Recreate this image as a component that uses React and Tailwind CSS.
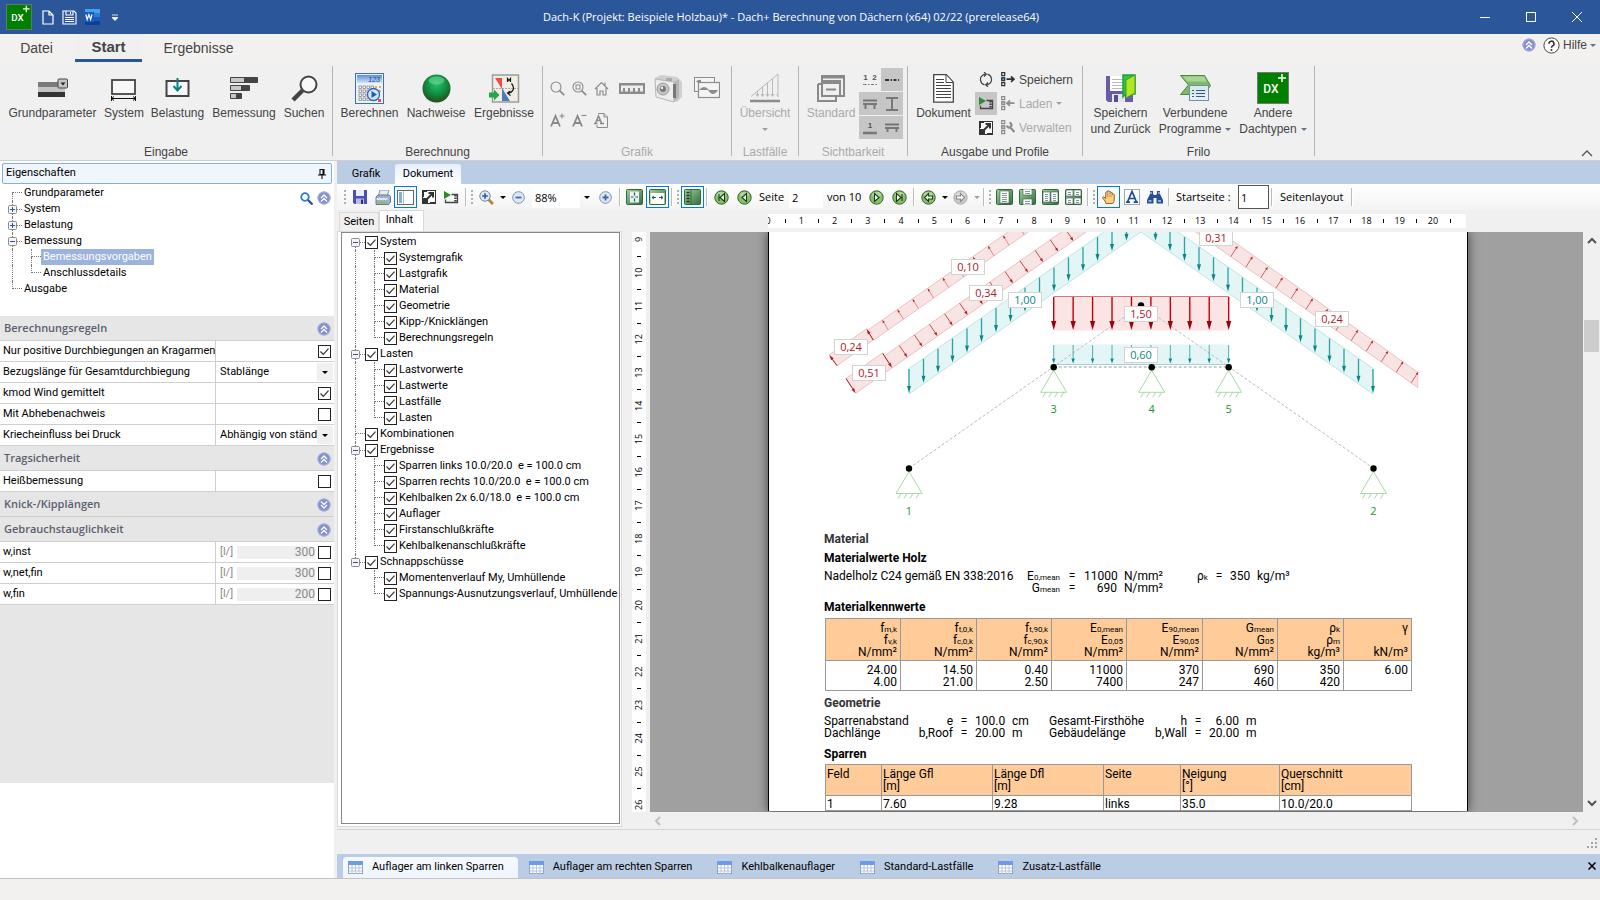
import React from 'react';
import clsx from 'clsx';

/* ---------- small shared bits ---------- */

const Caret = ({ className = 'text-gray-500' }) => (
  <svg width="6" height="3" viewBox="0 0 6 3" className={clsx('inline-block shrink-0', className)}>
    <path d="M0 0h6L3 3z" fill="currentColor" />
  </svg>
);

const CircleChevron = ({ down }) => (
  <svg width="14" height="14" viewBox="0 0 14 14" className="shrink-0">
    <circle cx="7" cy="7" r="6.5" fill="#8290cc" />
    <circle cx="7" cy="7" r="6" fill="none" stroke="#a9aede" />
    <path
      d={down ? 'M4 3.5l3 3 3-3M4 7l3 3 3-3' : 'M4 7l3-3 3 3M4 10.5l3-3 3 3'}
      fill="none"
      stroke="#fff"
      strokeWidth="1.3"
    />
  </svg>
);

const Check = ({ id, checked, label }) => (
  <span className="inline-grid shrink-0">
    <input
      id={id}
      type="checkbox"
      defaultChecked={checked}
      aria-label={label}
      className="peer col-start-1 row-start-1 h-[13px] w-[13px] appearance-none border border-[#222] bg-white"
    />
    <svg
      width="13"
      height="13"
      viewBox="0 0 13 13"
      className="pointer-events-none invisible col-start-1 row-start-1 peer-checked:visible"
    >
      <path d="M2.5 6.5l2.8 2.8 5.2-5.6" fill="none" stroke="#333" strokeWidth="1.2" />
    </svg>
  </span>
);

const DxLogo = ({ size }) => (
  <svg width={size} height={size} viewBox="0 0 32 32">
    <rect x="0.5" y="0.5" width="31" height="31" fill="#008000" stroke="#777" />
    <text x="14" y="21" textAnchor="middle" fontFamily="Roboto, sans-serif" fontSize="12" fontWeight="500" fill="#fff">
      DX
    </text>
    <path d="M21 6h8M25 2v8" stroke="#fff" strokeWidth="1.5" />
  </svg>
);

/* ---------- title bar ---------- */

const TitleBar = () => (
  <header className="flex h-[34px] shrink-0 items-center bg-[#2b579a] text-white">
    <div className="flex w-[120px] items-center pl-1.5">
      <DxLogo size={26} />
      <button aria-label="Neu" className="ml-2.5">
        <svg width="12" height="15" viewBox="0 0 12 15" fill="none" stroke="#fff" strokeWidth="1.2">
          <path d="M1 1h6l4 4v9H1zM7 1v4h4" />
        </svg>
      </button>
      <button aria-label="Speichern" className="ml-2">
        <svg width="15" height="15" viewBox="0 0 15 15" fill="none" stroke="#fff" strokeWidth="1.1">
          <path d="M1 1h11l2 2v11H1zM4 1v4h7V1M8.500 2v2M3 7.500h9M3 9.500h9M3 11.500h9" />
        </svg>
      </button>
      <button aria-label="Word" className="ml-[7px]">
        <svg width="16" height="16" viewBox="0 0 16 16">
          <rect x="1" y="0" width="15" height="4" fill="#41a5ee" />
          <rect x="1" y="4" width="15" height="4" fill="#2b7cd3" />
          <rect x="1" y="8" width="15" height="4" fill="#185abd" />
          <rect x="1" y="12" width="15" height="4" fill="#103f91" />
          <rect x="0" y="3" width="10" height="10" fill="#185abd" />
          <path d="M1.800 5.500l1.400 5 1.700-5 1.700 5 1.400-5" fill="none" stroke="#fff" strokeWidth="1.200" />
        </svg>
      </button>
      <button aria-label="Anpassen" className="ml-3">
        <svg width="6" height="7" viewBox="0 0 6 7">
          <path d="M0 1h6M0 3.500h6L3 6.500z" fill="#fff" stroke="#fff" strokeWidth="0.800" />
        </svg>
      </button>
    </div>
    <h1 className="flex-1 truncate text-center font-['Open_Sans',sans-serif] text-[11px]">
      Dach-K (Projekt: Beispiele Holzbau)* - Dach+ Berechnung von Dächern (x64) 02/22 (prerelease64)
    </h1>
    <div className="flex w-[138px]">
      <button aria-label="Minimieren" className="flex w-[46px] justify-center">
        <svg width="10" height="10"><path d="M0 5.500h10" stroke="#fff" /></svg>
      </button>
      <button aria-label="Maximieren" className="flex w-[46px] justify-center">
        <svg width="10" height="10"><rect x="0.500" y="0.500" width="9" height="9" fill="none" stroke="#fff" /></svg>
      </button>
      <button aria-label="Schließen" className="flex w-[46px] justify-center">
        <svg width="10" height="10"><path d="M0 0l10 10M10 0L0 10" stroke="#fff" /></svg>
      </button>
    </div>
  </header>
);

const RibbonTabs = () => (
  <nav className="flex h-7 shrink-0 items-stretch bg-[#f3f1ef] text-sm text-[#444]">
    <button className="w-[73px]">Datei</button>
    <button className="ml-0.5 w-[67px] border-b-3 border-[#2b579a] bg-[#f0f0f0] text-[15px] font-bold">Start</button>
    <button className="w-[113px]">Ergebnisse</button>
    <div className="ml-auto flex items-start gap-[7px] pt-[3px] pr-1 text-[12px]">
      <span className="pt-px"><CircleChevron /></span>
      <button className="flex items-center gap-[3px]">
        <svg width="17" height="17" viewBox="0 0 17 17">
          <circle cx="8.500" cy="8.500" r="7.600" fill="#fff" stroke="#444" />
          <path d="M6 6.700a2.500 2.500 0 1 1 3.600 2.200q-1.100.6-1.100 1.800" fill="none" stroke="#333" strokeWidth="1.600" />
          <circle cx="8.500" cy="12.900" r="1" fill="#333" />
        </svg>
        Hilfe
        <Caret />
      </button>
    </div>
  </nav>
);

/* ---------- ribbon icons ---------- */

const IconParams = () => (
  <svg width="30" height="20" viewBox="0 0 30 20">
    <rect x="0" y="4" width="20" height="5" fill="#7b7b7b" />
    <rect x="0" y="9" width="27" height="5" fill="#c4c4c4" />
    <rect x="0" y="14" width="27" height="5" fill="#333" />
    <rect x="20" y="1" width="9.500" height="9" rx="1" fill="#c4c4c4" stroke="#444" />
    <path d="M22.500 4.500h5l-2.500 3z" fill="#222" />
  </svg>
);
const IconSystem = () => (
  <svg width="28" height="28" viewBox="0 -4 28 28" fill="none" stroke="#444">
    <rect x="2" y="2" width="23" height="14" fill="#f8f8f8" strokeWidth="1.800" />
    <path d="M1.500 18v5M25.500 18v5M1 20.500h25M4 18.500l-2.500 2 2.500 2M23 18.500l2.500 2-2.500 2" stroke="#111" />
  </svg>
);
const IconLoad = () => (
  <svg width="25" height="20" viewBox="0 0 25 20" fill="none">
    <rect x="1.500" y="3" width="22" height="15" fill="#f8f8f8" stroke="#444" strokeWidth="2" />
    <path d="M12.500 0v11M8.500 8l4 4.500 4-4.500" stroke="#0b8080" strokeWidth="2" />
  </svg>
);
const IconDesign = () => (
  <svg width="28" height="23" viewBox="0 0 28 23" stroke="#444">
    <path d="M.5.500h27v5H.5zM.5 8.500h19v5H.5zM.5 16.500h11v5H.5z" fill="#444" />
    <path d="M1 1h13v4H1zM1 9h10v4H1zM1 17h5v4H1z" fill="#c8c8c8" stroke="none" />
  </svg>
);
const IconSearch = () => (
  <svg width="27" height="27" viewBox="0 0 27 27" fill="none" stroke="#444">
    <circle cx="17.500" cy="9.500" r="8" fill="#f8f8f8" strokeWidth="2" />
    <path d="M11.500 15.500L2 25" strokeWidth="4.500" />
  </svg>
);
const IconCalc = () => (
  <svg width="29" height="31" viewBox="0 0 29 31">
    <defs>
      <linearGradient id="calc" x1="0" y1="0" x2="0" y2="1">
        <stop offset="0" stopColor="#5b8fdc" />
        <stop offset="1" stopColor="#cfe2fb" />
      </linearGradient>
    </defs>
    <rect x="0.500" y="0.500" width="28" height="30" fill="#eaf2fd" stroke="#3e6fb8" />
    <rect x="2" y="2" width="25" height="8" fill="url(#calc)" />
    <text x="25" y="9" textAnchor="end" fontFamily="Liberation Sans, sans-serif" fontStyle="italic" fontSize="7" fill="#1c4587">123</text>
    {[13, 17, 21, 25].map((y) =>
      [4, 8, 12, 16].map((x) => <rect key={`${x}-${y}`} x={x} y={y} width="2.500" height="2.500" fill="#fff" stroke="#777" strokeWidth="0.700" />)
    )}
    <path d="M20 13h2v2h-2zM24 13h2v2h-2zM24 17h2v2h-2z" fill="#e9a94a" />
    <path d="M23 26h3v3h-3z" fill="#d9534f" />
    <circle cx="18.500" cy="21.500" r="6" fill="#d5e6fb" stroke="#2a66b5" strokeWidth="1.300" />
    <path d="M16.500 18l5.500 3.500-5.500 3.500z" fill="#1d5bb0" />
  </svg>
);
const IconBall = () => (
  <svg width="29" height="29" viewBox="0 0 29 29">
    <defs>
      <radialGradient id="ball" cx="0.500" cy="0.350" r="0.700">
        <stop offset="0" stopColor="#28c26a" />
        <stop offset="0.500" stopColor="#0f8f43" />
        <stop offset="1" stopColor="#2f3f12" />
      </radialGradient>
    </defs>
    <circle cx="14.500" cy="14.500" r="14" fill="url(#ball)" />
    <ellipse cx="14.500" cy="6.500" rx="8" ry="4" fill="#7fe3a8" opacity="0.500" />
  </svg>
);
const IconResults = () => (
  <svg width="31" height="29" viewBox="0 0 31 29">
    <rect x="3.500" y="1" width="26" height="27" fill="#f2ede4" stroke="#9c9c9c" strokeWidth="1.500" />
    <path d="M4 14.500h25" stroke="#aaa" strokeDasharray="2 1" />
    <path d="M6 4h7v11z" fill="#ef4a4a" />
    <path d="M13 14v13h8z" fill="#4a7cb8" />
    <path d="M18.500 8V4.500l1.500 2 1.500-2V8M22.500 9.500q3 3.500 1.500 6.500-1.500 3-4.500 3M21.500 21.500l-3-2.500 3-2" fill="none" stroke="#111" strokeWidth="1.200" />
    <path d="M0 18.500h5v-3l5.500 5.500-5.500 5.500v-3H0z" fill="#22a84a" />
  </svg>
);

const gray = '#8c8c8c';
const IconLens = ({ frame }) => (
  <svg width="15" height="15" viewBox="0 0 15 15" fill="none" stroke={gray}>
    <circle cx="6" cy="6" r="5" strokeWidth="1.100" />
    <path d="M9.700 9.700l4.500 4.500" strokeWidth="1.800" />
    {frame && <rect x="4" y="4" width="4" height="4" />}
  </svg>
);
const IconHome = () => (
  <svg width="15" height="15" viewBox="0 0 15 15" fill="none" stroke={gray} strokeWidth="1.200">
    <path d="M1 8l6.500-6.500L14 8M3 7v7h3v-4h3v4h3V7M11 1.500v3" />
  </svg>
);
const IconRuler = () => (
  <svg width="26" height="11" viewBox="0 0 26 11">
    <rect width="26" height="11" fill={gray} />
    <path d="M2 2.500h22v6h-3V5h-2v3.500h-3V5h-2v3.500h-3V5H9v3.500H6V5H4v3.500H2z" fill="#eee" />
  </svg>
);
const IconCamera = () => (
  <svg width="29" height="29" viewBox="0 0 29 29">
    <path d="M1 4l6-3 16 2 5 5v15l-5 5L2 23z" fill="#cfcfcf" />
    <path d="M1 5l19 3v20L2 23z" fill="#ededed" stroke="#b5b5b5" />
    <path d="M20 8l5-3v18l-5 5z" fill="#b5b5b5" />
    <circle cx="9" cy="15" r="6" fill="#c5c5c5" stroke="#9a9a9a" />
    <circle cx="9" cy="15" r="3" fill="#777" />
    <circle cx="8" cy="14" r="1.200" fill="#eee" />
    <rect x="19" y="10" width="3" height="14" fill="#777" />
    <rect x="12" y="4" width="6" height="3" fill="#aaa" />
  </svg>
);
const IconPictures = () => (
  <svg width="26" height="23" viewBox="0 0 26 23" stroke={gray}>
    <rect x="0.500" y="0.500" width="20" height="14" fill="#f4f4f4" />
    <rect x="4.500" y="5.500" width="21" height="15" fill="#f4f4f4" strokeWidth="1.200" />
    <path d="M2 5q2-3 5-2v3z" fill={gray} stroke="none" />
    <path d="M5 13q5-6 10 0z" fill={gray} stroke="none" />
    <path d="M14 13h10q-5 8-10 0z" fill={gray} stroke="none" />
  </svg>
);
const IconFont = ({ sign }) => (
  <svg width="15" height="14" viewBox="0 0 15 14" fill="none" stroke="#888" strokeWidth="1.800">
    <path d="M1 13.500L5.500 3 10 13.500M2.500 10h6" />
    <path d={sign === '+' ? 'M9.500 3h5M12 .5v5' : 'M9.500 2.500h5'} strokeWidth="1.100" />
  </svg>
);
const IconFontPage = () => (
  <svg width="14" height="15" viewBox="0 0 14 15" fill="none" stroke={gray}>
    <path d="M4 .5h6l3.500 3.500v10.500H3V12M10 .5V4h3.500" />
    <path d="M1.500 10L4.500 3 7.500 10M2.500 7.500h4M0 10.500h3.500M6 10.500h4" strokeWidth="1.500" />
  </svg>
);
const IconOverview = () => (
  <svg width="30" height="30" viewBox="0 0 30 30" fill="none" stroke="#b9b9b9">
    <path d="M1 23.500L28 1v23M22.500 6v17M17.500 10v13M12.500 14v9M7.500 18v5" />
    <path d="M6 21l1.500 2.500L9 21M11 21l1.500 2.500L14 21M16 21l1.500 2.500L19 21M21 21l1.500 2.500L24 21M26.500 21l1.500 2.500" />
    <path d="M0 28h30" stroke={gray} strokeWidth="2.500" />
  </svg>
);
const IconStandard = () => (
  <svg width="28" height="29" viewBox="0 0 28 29" fill="none" stroke="#8a8a8a" strokeWidth="2">
    <path d="M5 6V2h22v20h-4" />
    <path d="M5 3h22" strokeWidth="3" />
    <path d="M1 10v17h18v-4M1 10h3" />
    <rect x="5" y="7" width="18" height="15" fill="#f0f0f0" />
    <path d="M5 9h18" strokeWidth="2" />
    <path d="M9 15.500h10" />
  </svg>
);
const IconDocument = () => (
  <svg width="21" height="29" viewBox="0 0 21 29" fill="#fff" stroke="#444">
    <path d="M.7.700h12.600l7 7.500v20H.7z" strokeWidth="1.300" />
    <path d="M13 1v7.500h7M3 5.500h8M3 8.500h8M3 11.500h15M3 14.500h15M3 17.500h15M3 20.500h15M3 23.500h15" />
  </svg>
);
const IconRefresh = () => (
  <svg width="14" height="15" viewBox="0 0 14 15" fill="none" stroke="#444" strokeWidth="1.200">
    <path d="M5.500 12.800A5.400 5.400 0 0 1 4 3q1-.8 3-.8M8.500 2.200A5.400 5.400 0 0 1 10 12q-1 .8-3 .8" />
    <path d="M5 0l2.300 2.200L5 4.500M9 10.500l-2.300 2.300L9 15" />
  </svg>
);
const IconFilm = () => (
  <svg width="15" height="13" viewBox="0 0 15 13">
    <path d="M0 0l7 4-7 4z" fill="#2e8b2e" />
    <path d="M7.500 3.500h6v8h-12V8.500" fill="none" stroke="#444" strokeWidth="1.300" />
    <path d="M11.500 4v8" stroke="#444" strokeWidth="2.500" strokeDasharray="1.500 1" />
  </svg>
);
const IconExpand = () => (
  <svg width="14" height="14" viewBox="0 0 14 14">
    <rect x="0.500" y="0.500" width="13" height="13" fill="#fff" stroke="#333" />
    <path d="M0 0h5v2H2v5H0zM0 8h6v6H0zM8 12h6v2H8z" fill="#333" />
    <path d="M5 9l5.500-5.500M6.500 3h4.500v4.500" fill="none" stroke="#333" strokeWidth="2" />
  </svg>
);
const IconProfile = ({ kind }) => (
  <svg width="14" height="15" viewBox="0 0 14 15" fill="none" stroke={kind === 'out' ? '#333' : '#8a8a8a'}>
    <path d="M.7.700h3v3h-3zM.7 10.700h3v3h-3z" strokeWidth="1.200" />
    <rect x="0.700" y="5.700" width="3" height="3" fill={kind === 'out' ? '#3b9ae0' : '#bbb'} strokeWidth="1.200" />
    {kind === 'out' && <path d="M5.500 7.200h7M10 4.500l3 2.700-3 2.700" strokeWidth="1.700" />}
    {kind === 'in' && <path d="M6.500 7.200h7M9 4.500L6 7.200l3 2.700" strokeWidth="1.700" />}
    {kind === 'tool' && <path d="M13.500 12L8.500 6.500M6 5.500a2.600 2.600 0 0 0 3.500 2M9.500 7a2.600 2.600 0 0 0-1-4.500" strokeWidth="2.200" />}
  </svg>
);
const IconSaveBack = () => (
  <svg width="30" height="29" viewBox="0 0 30 29">
    <path d="M0 2h27v26H2l-2-2z" fill="#6a5aa8" />
    <path d="M4 2h15v15H4z" fill="#fff" />
    <path d="M6 5.500h11M6 8.500h11M6 11.500h11M6 14.500h11" stroke="#b9b9c9" />
    <path d="M6 20h13v8H6z" fill="#e5e5ee" />
    <path d="M8 21h4v7H8z" fill="#5a5080" />
    <path d="M17 1h12v19h-9l-3 3z" fill="#34c13c" stroke="#18a34a" strokeWidth="1.500" />
    <path d="M20 6l9-5v18l-9 5z" fill="#b5e61d" stroke="#3aa030" />
  </svg>
);
const IconLinked = () => (
  <svg width="31" height="26" viewBox="0 0 31 26">
    <path d="M.5.500h24l6 10-6 9H.5l8-9.500z" fill="#7fb96a" stroke="#4a8a3c" />
    <path d="M3 1.500h21l3 5H7z" fill="#a9d694" />
    <rect x="9.500" y="10.500" width="19" height="15" fill="#e6eef4" fillOpacity="0.900" stroke="#6f8fae" />
    <path d="M12 15.500h2M16 15.500h9M12 18.500h2M16 18.500h9M12 21.500h2M16 21.500h9" stroke="#355a8c" />
  </svg>
);

/* ---------- ribbon ---------- */

const Group = ({ label, dim, className, children }) => (
  <>
    <section className={clsx('flex shrink-0 flex-col', className)}>
      <div className="flex flex-1 justify-center">{children}</div>
      <h2 className={clsx('text-center text-[12px] leading-4', dim ? 'text-[#aaa]' : 'text-[#444]')}>{label}</h2>
    </section>
    <div className="mt-1 h-[90px] w-px shrink-0 bg-[#b5b5b5]" />
  </>
);

const BigButton = ({ icon, label, line2, caret, dim, className }) => (
  <button className={clsx('flex flex-col items-center pt-2.5 text-[12px] leading-4 whitespace-nowrap', dim ? 'text-[#aaa]' : 'text-[#444]', className)}>
    <span className="mb-px flex h-8 items-center">{icon}</span>
    <span>{label}</span>
    {(line2 || caret) && (
      <span className="flex h-4 items-center gap-1">
        {line2}
        {caret && <Caret className={dim ? 'text-gray-400' : 'text-gray-500'} />}
      </span>
    )}
  </button>
);

const IconButton = ({ label, className, children }) => (
  <button aria-label={label} className={clsx('flex items-center justify-center', className)}>{children}</button>
);

const viewCells = [
  ['Nummern', <path key="a" d="M1 12.500h3.500M6 12.500h1.500M9 12.500h3M13.500 12.500H15" />, '1  2'],
  ['Achsen', <path key="b" d="M1 8h4M6.500 8h1.500M9.500 8h3M14 8h1" stroke="#333" strokeWidth="2" />],
  ['Lager', <path key="c" d="M1 4.500h14M1 8h14M3.500 8v5M12.500 8v5" strokeWidth="2" />],
  ['Profil', <path key="d" d="M2 2h12M2 14h12M8 2v12" strokeWidth="2" />],
  ['Stab', <path key="e" d="M1 13h14" strokeWidth="2.500" />, '1'],
  ['Rahmen', <path key="f" d="M1 4.500h14M1 8h14M3.500 8v4M12.500 8v4" strokeWidth="2" />],
];

const Ribbon = () => (
  <div className="flex h-[99px] shrink-0 border-b border-[#cfcfcf] bg-[#f0f0f0]">
    <Group label="Eingabe" className="w-[332px]">
      <BigButton icon={<IconParams />} label="Grundparameter" className="w-[97px]" />
      <BigButton icon={<IconSystem />} label="System" className="w-[46px]" />
      <BigButton icon={<IconLoad />} label="Belastung" className="w-[61px]" />
      <BigButton icon={<IconDesign />} label="Bemessung" className="w-[72px]" />
      <BigButton icon={<IconSearch />} label="Suchen" className="w-12" />
    </Group>
    <Group label="Berechnung" className="w-[209px]">
      <BigButton icon={<IconCalc />} label="Berechnen" className="w-[66px]" />
      <BigButton icon={<IconBall />} label="Nachweise" className="w-[67px]" />
      <BigButton icon={<IconResults />} label="Ergebnisse" className="w-[69px]" />
    </Group>
    <Group label="Grafik" dim className="w-[188px]">
      <div className="grid grid-cols-3 grid-rows-[32px_32px] pt-2.5">
        <IconButton label="Zoom" className="w-[22px]"><IconLens /></IconButton>
        <IconButton label="Zoom Fenster" className="w-[22px]"><IconLens frame /></IconButton>
        <IconButton label="Gesamt" className="w-[22px]"><IconHome /></IconButton>
        <IconButton label="Schrift größer" className="w-[22px]"><IconFont sign="+" /></IconButton>
        <IconButton label="Schrift kleiner" className="w-[22px]"><IconFont sign="-" /></IconButton>
        <IconButton label="Schriftart" className="w-[22px]"><IconFontPage /></IconButton>
      </div>
      <div className="box-content flex h-8 pt-2.5">
        <IconButton label="Maßketten" className="w-10"><IconRuler /></IconButton>
        <IconButton label="Schnappschuss" className="w-[33px]"><IconCamera /></IconButton>
        <IconButton label="Bilder" className="w-[43px]"><IconPictures /></IconButton>
      </div>
    </Group>
    <Group label="Lastfälle" dim className="w-[66px]">
      <BigButton icon={<IconOverview />} label="Übersicht" caret dim className="w-[62px]" />
    </Group>
    <Group label="Sichtbarkeit" dim className="w-[108px]">
      <BigButton icon={<IconStandard />} label="Standard" dim className="w-[55px]" />
      <div className="grid grid-cols-2 content-start gap-y-px pt-1.5">
        {viewCells.map(([label, shape, digits], i) => (
          <IconButton key={label} label={label} className={clsx('h-[23px] w-[22px]', i > 0 && 'bg-[#c6c6c6]')}>
            <svg width="16" height="16" viewBox="0 0 16 16" stroke="#777" fill="none">
              {shape}
              {digits && (
                <text x="8" y="8" textAnchor="middle" fontSize="8" fontWeight="700" fill="#555" stroke="none" xmlSpace="preserve">
                  {digits}
                </text>
              )}
            </svg>
          </IconButton>
        ))}
      </div>
    </Group>
    <Group label="Ausgabe und Profile" className="w-[174px]">
      <BigButton icon={<IconDocument />} label="Dokument" className="ml-1 w-[63px]" />
      <div className="flex flex-col gap-px pt-1.5">
        <IconButton label="Aktualisieren" className="h-[23px] w-[22px]"><IconRefresh /></IconButton>
        <IconButton label="Vorschau" className="h-[23px] w-[22px] bg-[#c6c6c6]"><IconFilm /></IconButton>
        <IconButton label="Vergrößern" className="h-[23px] w-[22px]"><IconExpand /></IconButton>
      </div>
      <div className="flex flex-1 flex-col gap-px pt-1.5 pl-1 text-[12px]">
        <button className="flex h-[23px] items-center gap-1 text-[#444]"><IconProfile kind="out" />Speichern</button>
        <button className="flex h-[23px] items-center gap-1 text-[#aaa]"><IconProfile kind="in" />Laden <Caret className="text-gray-400" /></button>
        <button className="flex h-[23px] items-center gap-1 text-[#aaa]"><IconProfile kind="tool" />Verwalten</button>
      </div>
    </Group>
    <Group label="Frilo" className="w-[231px]">
      <BigButton icon={<IconSaveBack />} label="Speichern" line2="und Zurück" className="w-[68px]" />
      <BigButton icon={<IconLinked />} label="Verbundene" line2="Programme" caret className="w-[81px]" />
      <BigButton icon={<DxLogo size={32} />} label="Andere" line2="Dachtypen" caret className="w-[75px]" />
    </Group>
    <button aria-label="Menüband ausblenden" className="mt-auto mr-[7px] mb-[3px] ml-auto">
      <svg width="12" height="7" viewBox="0 0 12 7"><path d="M1 6l5-5 5 5" fill="none" stroke="#555" strokeWidth="1.300" /></svg>
    </button>
  </div>
);

/* ---------- tree helpers ---------- */

const dots = 'border-dotted border-[#777]';

const Expander = ({ open, first, last }) => (
  <span className="flex w-[14px] shrink-0 items-center">
    <span className="flex w-[9px] flex-col">
      <span className={clsx('ml-1 h-1', !first && `border-l ${dots}`)} />
      <svg width="9" height="9" viewBox="0 0 9 9">
        <rect x="0.500" y="0.500" width="8" height="8" rx="1" fill="#f4f4f4" stroke="#8c8c8c" />
        <path d={open ? 'M2 4.500h5' : 'M2 4.500h5M4.500 2v5'} stroke="#3450a0" />
      </svg>
      <span className={clsx('ml-1 h-[3px]', !last && `border-l ${dots}`)} />
    </span>
    <span className={`w-[5px] border-t ${dots}`} />
  </span>
);

const Elbow = ({ first, last }) => (
  <span className="ml-1 flex w-2.5 shrink-0 flex-col self-stretch">
    <span className={clsx('h-2 border-b', dots, !first && 'border-l')} />
    <span className={clsx('h-2', !last && `border-l ${dots}`)} />
  </span>
);

const Stem = ({ on }) => <span className={clsx('ml-1 w-[15px] shrink-0', on && `border-l ${dots}`)} />;

/* ---------- left panel ---------- */

const navItems = [
  { text: 'Grundparameter' },
  { text: 'System', box: 'plus' },
  { text: 'Belastung', box: 'plus' },
  {
    text: 'Bemessung',
    box: 'minus',
    children: [{ text: 'Bemessungsvorgaben', active: true }, { text: 'Anschlussdetails' }],
  },
  { text: 'Ausgabe' },
];

const NavTree = () => (
  <ul className="flex-1 pt-px pl-2 text-[11px] leading-4">
    {navItems.map((item, i) => (
      <li key={item.text}>
        <div className="flex h-4">
          {item.box ? (
            <Expander open={item.box === 'minus'} />
          ) : (
            <Elbow first={i === 0} last={i === navItems.length - 1} />
          )}
          <a href="#" className="pl-0.5">{item.text}</a>
        </div>
        {item.children && (
          <ul>
            {item.children.map((child, j) => (
              <li key={child.text} className="flex h-4">
                <Stem on />
                <Elbow last={j === item.children.length - 1} />
                <a href="#" className={clsx('pl-0.5', child.active && 'bg-[#9cb3de] pr-0.5 text-white')}>{child.text}</a>
              </li>
            ))}
          </ul>
        )}
      </li>
    ))}
  </ul>
);

const SectionHead = ({ text, down }) => (
  <div className="flex h-[25px] items-center justify-between border-b border-[#cfcfcf] bg-[#e6e6e6] pt-px pr-[3px] pl-1 font-['Open_Sans',sans-serif] text-[11px] font-semibold text-[#5c5f6e]">
    <h3>{text}</h3>
    <button aria-label={text}><CircleChevron down={down} /></button>
  </div>
);

const Row = ({ id, label, children }) => (
  <div className="flex h-[21px] items-stretch border-b border-[#cfcfcf] bg-white">
    <label htmlFor={id} className="flex w-[215px] shrink-0 items-center pl-[3px] whitespace-nowrap">{label}</label>
    <div className="flex flex-1 items-center justify-end border-l border-[#cfcfcf] pr-[3px]">{children}</div>
  </div>
);

const SelectRow = ({ id, label, value }) => (
  <Row id={id} label={label}>
    <span className="grid h-full flex-1 items-center">
      <select id={id} className="col-start-1 row-start-1 h-full w-full appearance-none bg-transparent pl-1">
        <option>{value}</option>
      </select>
      <span className="pointer-events-none col-start-1 row-start-1 -mr-0.5 flex h-[18px] w-4 items-center justify-center justify-self-end bg-[#f0f0f0]">
        <Caret className="text-black" />
      </span>
    </span>
  </Row>
);

const LimitRow = ({ id, label, value }) => (
  <Row id={id} label={label}>
    <span className="w-[21px] shrink-0 pl-1 text-[#8a8a8a]">[l/]</span>
    <input id={id} defaultValue={value} className="h-[13px] w-0 flex-1 bg-[#efefef] text-right text-[12px] text-[#8a8a8a]" />
    <span className="w-[3px]" />
    <Check label={`${label} aktiv`} />
  </Row>
);

const PropertiesPanel = () => (
  <aside className="flex w-[334px] shrink-0 flex-col bg-white font-[Roboto,sans-serif] text-[11px] text-black">
    <div className="mx-0.5 mt-0.5 flex h-[21px] items-center justify-between rounded-xs border border-[#84aee8] bg-[#eff6fe] pr-[5px] pl-[3px]">
      <h2>Eigenschaften</h2>
      <button aria-label="Anheften">
        <svg width="8" height="10" viewBox="0 0 8 10" fill="none" stroke="#111">
          <path d="M2 .5h4v5H2zM5 .5v5M0 6h8M4 6v4" strokeWidth="1.100" />
        </svg>
      </button>
    </div>
    <div className="flex h-[132px] items-start">
      <NavTree />
      <div className="flex items-center gap-1 pt-[7px] pr-[3px]">
        <button aria-label="Suchen">
          <svg width="13" height="13" viewBox="0 0 13 13" fill="none">
            <circle cx="5" cy="5" r="3.800" stroke="#2f7fc4" strokeWidth="1.800" />
            <path d="M8 8l4.500 4.500" stroke="#1f4f93" strokeWidth="2.200" />
          </svg>
        </button>
        <CircleChevron />
      </div>
    </div>
    <div className="flex-1 bg-[#e6e6e6]">
      <SectionHead text="Berechnungsregeln" />
      <Row id="kragarm" label="Nur positive Durchbiegungen an Kragarmen"><Check id="kragarm" checked /></Row>
      <SelectRow id="bezug" label="Bezugslänge für Gesamtdurchbiegung" value="Stablänge" />
      <Row id="kmod" label="kmod Wind gemittelt"><Check id="kmod" checked /></Row>
      <Row id="abheben" label="Mit Abhebenachweis"><Check id="abheben" /></Row>
      <SelectRow id="kriech" label="Kriecheinfluss bei Druck" value="Abhängig von ständ" />
      <SectionHead text="Tragsicherheit" />
      <Row id="heiss" label="Heißbemessung"><Check id="heiss" /></Row>
      <SectionHead text="Knick-/Kipplängen" down />
      <SectionHead text="Gebrauchstauglichkeit" />
      <LimitRow id="winst" label="w,inst" value="300" />
      <LimitRow id="wnet" label="w,net,fin" value="300" />
      <LimitRow id="wfin" label="w,fin" value="200" />
    </div>
    <div className="h-[95px] shrink-0 bg-white" />
  </aside>
);

/* ---------- document toolbar ---------- */

const Sep = () => <span className="mx-[2px] h-[18px] w-0.5 shrink-0 border-r border-white bg-[#bdbdbd]" />;
const Grip = () => (
  <span className="mx-0.5 h-[15px] w-0.5 shrink-0 bg-[repeating-linear-gradient(to_bottom,#b0b0b0_0_2px,transparent_2px_4px)]" />
);
const Tool = ({ label, on, children }) => (
  <button aria-label={label} className={clsx('flex h-[22px] w-[23px] shrink-0 items-center justify-center border', on ? 'border-[#0a78d7] bg-[#f5f9fd]' : 'border-transparent')}>
    {children}
  </button>
);
const DropArrow = ({ dim }) => (
  <button aria-label="Auswahl" className="flex w-[9px] shrink-0 justify-center">
    <Caret className={dim ? 'text-gray-400' : 'text-black'} />
  </button>
);

const GreenBox = ({ children }) => (
  <svg width="17" height="16" viewBox="0 0 17 16">
    <defs>
      <linearGradient id="gb" x1="0" y1="0" x2="1" y2="1">
        <stop offset="0" stopColor="#a3cf9f" />
        <stop offset="1" stopColor="#2f6f3c" />
      </linearGradient>
    </defs>
    <rect x="0.500" y="0.500" width="16" height="15" rx="1" fill="url(#gb)" stroke="#2f6a3a" />
    {children}
  </svg>
);
const RoundIcon = ({ d, filled, gray: g }) => (
  <svg width="15" height="15" viewBox="0 0 15 15">
    <circle cx="7.500" cy="7.500" r="6.700" fill={g ? '#c9c9c9' : '#86c06a'} stroke={g ? '#b0b0b0' : '#3c5f34'} />
    <ellipse cx="7.500" cy="4.500" rx="4.500" ry="2.500" fill="#fff" opacity="0.350" />
    <path d={d} fill={filled ? '#fff' : 'none'} stroke={g ? '#888' : '#163d12'} strokeWidth="1.100" />
  </svg>
);
const ZoomRound = ({ plus }) => (
  <svg width="13" height="13" viewBox="0 0 13 13">
    <circle cx="6.500" cy="6.500" r="5.800" fill="#dfe9f5" stroke="#7e90aa" />
    <path d={plus ? 'M3.500 6.500h6M6.500 3.500v6' : 'M3.500 6.500h6'} stroke="#3f68a8" strokeWidth="1.800" />
  </svg>
);
const PageShape = ({ x, y, w, h }) => {
  const lines = [];
  for (let ly = y + 2; ly < y + h - 1; ly += 2) lines.push(`M${x + 2} ${ly + 0.5}h${w - 4}`);
  return (
    <>
      <rect x={x} y={y} width={w} height={h} fill="#fff" stroke="#3c5f44" strokeWidth="0.6" />
      <path d={lines.join('')} stroke="#8494a8" />
    </>
  );
};

const IconDisk = () => (
  <svg width="14" height="14" viewBox="0 0 14 14">
    <path d="M0 0h14v14H1.500L0 12.500z" fill="#4a4fb5" />
    <path d="M3 0h8v6H3z" fill="#e8ecfb" />
    <path d="M3 8.500h8V14H3z" fill="#b9bfe0" />
    <path d="M8 9.500h2V14H8z" fill="#2e2f6b" />
  </svg>
);
const IconPrinter = () => (
  <svg width="16" height="15" viewBox="0 0 16 15">
    <path d="M5 0h9l-2 7H3z" fill="#e3ecf7" stroke="#6f87a3" strokeWidth="0.800" />
    <path d="M1 7l2-2h11l1.500 1.500V12l-2 2.500H1z" fill="#9fb3c8" stroke="#4d6076" strokeWidth="0.800" />
    <path d="M1.500 8h11v2h-11z" fill="#dbe6f0" />
    <path d="M3 12.500h8" stroke="#7bbf3a" strokeWidth="1.500" />
  </svg>
);
const IconSidebar = () => (
  <svg width="17" height="15" viewBox="0 0 17 15">
    <rect x="0.500" y="0.500" width="16" height="14" fill="#fff" stroke="#666" />
    <rect x="2" y="2" width="3" height="11" fill="#7db4d4" />
    <path d="M6.500 1v13" stroke="#bbb" />
  </svg>
);
const IconZoomTool = () => (
  <svg width="15" height="15" viewBox="0 0 15 15">
    <path d="M9.500 9.500l4.500 4.500" stroke="#b98a36" strokeWidth="3" />
    <circle cx="6" cy="6" r="5.200" fill="#dce8f5" stroke="#7388a5" />
    <path d="M3.200 6h5.600M6 3.200v5.600" stroke="#2e5a9c" strokeWidth="1.600" />
  </svg>
);
const IconHand = () => (
  <svg width="14" height="14" viewBox="0 0 14 14">
    <path
      d="M4 13.500Q3.500 11 1 8.500 0 7 1.500 6.700L3.700 8.500V2.500q.8-1.200 1.600 0V1.200q.9-1.300 1.800 0v.8q.9-1.200 1.800 0v1q.9-1 1.700 0V4.500q1.100-.8 1.700.2V9q0 2.500-1.500 4.500z"
      fill="#f7cf7e"
      stroke="#8a5a1c"
      strokeWidth="0.900"
    />
    <path d="M5.400 3v4M7.200 3v4M9 3v4" stroke="#c28a3c" strokeWidth="0.700" />
  </svg>
);
const IconSelectText = () => (
  <svg width="16" height="16" viewBox="0 0 16 16" fill="none">
    <rect x="0.500" y="0.500" width="15" height="15" stroke="#555" strokeDasharray="1 1" />
    <path d="M3.500 13L8 2.500 12.500 13M5.200 9.500h5.600M2 13.200h4M9.700 13.200h4.300" stroke="#1f4f93" strokeWidth="1.700" />
  </svg>
);
const IconBinoculars = () => (
  <svg width="16" height="14" viewBox="0 0 16 14">
    <path d="M3 1h3v3l1 1h2l1-1V1h3v3l3 6v3.500H9.500V8h-3v5.500H0V10l3-6z" fill="#24509a" />
    <path d="M1.500 11h3M11 11h3M4 2v2M12 2v2" stroke="#b7cbea" strokeWidth="1.300" />
  </svg>
);

const DocToolbar = () => (
  <div className="flex h-[26px] shrink-0 items-center bg-linear-to-b from-white to-[#f3f3f3] pl-[5px] font-['Open_Sans',sans-serif] text-[11px] text-black">
    <Grip />
    <Tool label="Speichern"><IconDisk /></Tool>
    <Tool label="Drucken"><IconPrinter /></Tool>
    <Tool label="Seitenleiste" on><IconSidebar /></Tool>
    <Tool label="Vergrößern"><IconExpand /></Tool>
    <Tool label="Vorschau"><IconFilm /></Tool>
    <Sep />
    <Grip />
    <Tool label="Zoom"><IconZoomTool /></Tool>
    <DropArrow />
    <Tool label="Kleiner"><ZoomRound /></Tool>
    <input aria-label="Zoomstufe" defaultValue="88%" className="ml-0.5 h-[22px] w-12 bg-white pl-[3px]" />
    <span className="flex w-[14px] shrink-0 justify-center"><DropArrow /></span>
    <Tool label="Größer"><ZoomRound plus /></Tool>
    <Sep />
    <Tool label="Ganze Seite">
      <GreenBox>
        <rect x="4" y="2.500" width="9" height="11" fill="#e8f0f0" />
        <path d="M8.500 3.500v3M8.500 9.500v3M5 8h2.500M9.500 8H12" stroke="#355" strokeWidth="1.200" />
      </GreenBox>
    </Tool>
    <Tool label="Seitenbreite" on>
      <GreenBox>
        <rect x="1.500" y="4" width="14" height="11" fill="#fff" />
        <path d="M3 8.500h4M10 8.500h4M5 7L3 8.500 5 10M12 7l2 1.500L12 10" fill="none" stroke="#355" />
      </GreenBox>
    </Tool>
    <Sep />
    <Grip />
    <Tool label="Gliederung" on>
      <GreenBox>
        <path d="M7 1v14" stroke="#2f6a3a" />
        <path d="M2.500 3.500h3M2.500 6.500h3M2.500 9.500h3M2.500 12.500h3" stroke="#18391d" strokeWidth="1.500" />
      </GreenBox>
    </Tool>
    <Sep />
    <Tool label="Erste Seite"><RoundIcon d="M5 4v7M10.500 3.500v8L6 7.500z" filled /></Tool>
    <Tool label="Vorige Seite"><RoundIcon d="M9.500 3.500v8L5 7.500z" filled /></Tool>
    <label htmlFor="page" className="w-[33px] shrink-0 pl-[3px]">Seite</label>
    <input id="page" defaultValue="2" className="h-[22px] w-[34px] shrink-0 bg-white pl-[3px]" />
    <span className="w-[42px] shrink-0 pl-1 whitespace-nowrap">von 10</span>
    <Tool label="Nächste Seite"><RoundIcon d="M5.500 3.500v8l4.500-4z" filled /></Tool>
    <Tool label="Letzte Seite"><RoundIcon d="M10 4v7M4.500 3.500v8l4.500-4z" filled /></Tool>
    <Sep />
    <Tool label="Zurück"><RoundIcon d="M7.500 3.500v2.500h4v3h-4v2.500l-4-4z" filled /></Tool>
    <DropArrow />
    <Tool label="Vorwärts"><RoundIcon d="M7.500 3.500v2.500h-4v3h4v2.500l4-4z" filled gray /></Tool>
    <DropArrow dim />
    <Sep />
    <Grip />
    <Tool label="Einzelseite"><GreenBox><PageShape x={4} y={2} w={9} h={12} /></GreenBox></Tool>
    <Tool label="Fortlaufend"><GreenBox><PageShape x={4} y={0} w={9} h={6} /><PageShape x={4} y={10} w={9} h={6} /></GreenBox></Tool>
    <Tool label="Doppelseite"><GreenBox><PageShape x={1} y={3} w={7} h={10} /><PageShape x={9} y={3} w={7} h={10} /></GreenBox></Tool>
    <Tool label="Doppelseite fortlaufend">
      <GreenBox>
        <PageShape x={1} y={1} w={7} h={6} />
        <PageShape x={9} y={1} w={7} h={6} />
        <PageShape x={1} y={9} w={7} h={6} />
        <PageShape x={9} y={9} w={7} h={6} />
      </GreenBox>
    </Tool>
    <Sep />
    <Grip />
    <Tool label="Verschieben" on><IconHand /></Tool>
    <Tool label="Text auswählen"><IconSelectText /></Tool>
    <Tool label="Suchen"><IconBinoculars /></Tool>
    <Sep />
    <label htmlFor="startpage" className="w-[66px] shrink-0 pl-1 whitespace-nowrap">Startseite :</label>
    <input id="startpage" defaultValue="1" className="h-6 w-[31px] shrink-0 border border-[#555] bg-white pl-0.5" />
    <Sep />
    <button className="px-[5px] whitespace-nowrap">Seitenlayout</button>
    <Sep />
  </div>
);

/* ---------- contents tree ---------- */

const contents = [
  { text: 'System', children: ['Systemgrafik', 'Lastgrafik', 'Material', 'Geometrie', 'Kipp-/Knicklängen', 'Berechnungsregeln'] },
  { text: 'Lasten', children: ['Lastvorwerte', 'Lastwerte', 'Lastfälle', 'Lasten'] },
  { text: 'Kombinationen' },
  {
    text: 'Ergebnisse',
    children: [
      'Sparren links 10.0/20.0  e = 100.0 cm',
      'Sparren rechts 10.0/20.0  e = 100.0 cm',
      'Kehlbalken 2x 6.0/18.0  e = 100.0 cm',
      'Auflager',
      'Firstanschlußkräfte',
      'Kehlbalkenanschlußkräfte',
    ],
  },
  { text: 'Schnappschüsse', children: ['Momentenverlauf My, Umhüllende', 'Spannungs-Ausnutzungsverlauf, Umhüllende'] },
];

const ContentsPane = () => (
  <div className="flex w-[285px] shrink-0 flex-col font-[Roboto,sans-serif] text-[11px] text-black">
    <div className="flex h-[21px] items-end pl-0.5">
      <button className="h-[19px] w-10 border border-b-0 border-[#d9d9d9] bg-[#f0f0f0]">Seiten</button>
      <button className="h-[21px] w-[45px] border border-b-0 border-[#d9d9d9] bg-white pr-1 pb-0.5">Inhalt</button>
    </div>
    <div className="mb-0.5 flex flex-1 flex-col border border-[#d9d9d9] bg-white pr-px pl-[3px] pb-0.5">
      <ul className="flex-1 border border-[#828790] pt-px pl-[9px] leading-4">
        {contents.map((item, i) => {
          const last = i === contents.length - 1;
          return (
            <li key={item.text}>
              <div className="flex h-4 items-center">
                {item.children ? <Expander open first={i === 0} last={last} /> : <Elbow />}
                <Check id={`c${i}`} checked />
                <label htmlFor={`c${i}`} className="pl-0.5">{item.text}</label>
              </div>
              {item.children && (
                <ul>
                  {item.children.map((text, j) => (
                    <li key={text} className="flex h-4">
                      <Stem on={!last} />
                      <Elbow last={j === item.children.length - 1} />
                      <span className="flex items-center"><Check id={`c${i}-${j}`} checked /></span>
                      <label htmlFor={`c${i}-${j}`} className="pl-0.5 whitespace-pre">{text}</label>
                    </li>
                  ))}
                </ul>
              )}
            </li>
          );
        })}
      </ul>
    </div>
  </div>
);

/* ---------- rulers ---------- */

const CM = 33.25;
const range = (n) => Array.from({ length: n }, (_, i) => i);

const RulerTop = () => (
  <svg width="698" height="14" className="bg-white" fontFamily="Open Sans, sans-serif" fontSize="9" textAnchor="middle">
    {range(21).map((n) => (
      <g key={n}>
        <text x={n * CM} y="10">{n}</text>
        <path d={`M${Math.round((n + 0.5) * CM) + 0.5} 5v4`} stroke="#000" />
      </g>
    ))}
  </svg>
);

const RulerLeft = () => (
  <svg width="14" height="580" className="bg-white" fontFamily="Open Sans, sans-serif" fontSize="9" textAnchor="middle">
    {range(18).map((n) => (
      <g key={n}>
        <text transform={`translate(10 ${7.5 + n * CM}) rotate(-90)`}>{n + 9}</text>
        <path d={`M5 ${Math.round(7.5 + (n + 0.5) * CM) + 0.5}h4`} stroke="#000" />
      </g>
    ))}
  </svg>
);

/* ---------- load diagram ---------- */

const RED = '#b3191f';
const TEAL = '#0c8686';

// arrow with a filled head, pointing from (x1,y1) to (x2,y2)
const Arrow = ({ x1, y1, x2, y2, color, shaft = color, head = 5, half = 1.6, w = 1 }) => {
  const len = Math.hypot(x2 - x1, y2 - y1);
  const ux = (x2 - x1) / len;
  const uy = (y2 - y1) / len;
  const bx = x2 - ux * head;
  const by = y2 - uy * head;
  return (
    <>
      <path d={`M${x1} ${y1}L${bx} ${by}`} stroke={shaft} strokeWidth={w} />
      <path d={`M${x2} ${y2}L${bx - uy * half} ${by + ux * half}L${bx + uy * half} ${by - ux * half}z`} fill={color} />
    </>
  );
};

const Support = ({ x, y, n }) => (
  <g>
    <path d={`M${x} ${y + 3}l-13 22h26z`} fill="none" stroke="#a9d8a9" />
    <path d={[-12, -6, 0, 6].map((o) => `M${x + o + 4} ${y + 25}l-3 5`).join('')} stroke="#a9d8a9" />
    <circle cx={x} cy={y} r="3.200" fill="#000" />
    <text x={x} y={y + 46} textAnchor="middle" fill="#1f961f">{n}</text>
  </g>
);

const LoadLabel = ({ x, y, text, color }) => (
  <g>
    <rect x={x + 0.5} y={y + 0.5} width="33" height="15" fill="#fff" stroke="#d3d3d3" />
    <text x={x + 17} y={y + 12} textAnchor="middle" fill={color}>{text}</text>
  </g>
);

const SLOPE = 0.7;

const LoadDiagram = () => (
  <svg viewBox="769 232 698 299" width="698" height="299" fontFamily="Open Sans, sans-serif" fontSize="11" className="block">
    {/* wind loads, left side */}
    <g fill="#f9e4e4" stroke="#e8b4b4" strokeWidth="0.8">
      <path d="M829 355L867 328.500 873 340 837 365.700z" />
      <path d={`M867.300 330.500L1060 ${330.5 - 192.7 * SLOPE}V${365.7 - 223 * SLOPE}L873 340.500z`} />
      <path d="M846 378.500L882.500 353 892 367.900 855.700 393.300z" />
      <path d={`M884 356.200L1100 ${356.2 - 216 * SLOPE}V${393.3 - 244.3 * SLOPE}L892 367.900z`} />
      <path d="M1180 203.500L1418 372.500V387.700L1180 221z" />
    </g>
    <Arrow x1={837} y1={365.7} x2={829.5} y2={355.2} color={RED} />
    <Arrow x1={873.3} y1={340} x2={866.7} y2={329.3} color={RED} />
    {range(12).map((i) => {
      const x = 888.3 + i * 15.1;
      const y = 365.7 - (x - 837) * SLOPE;
      return <Arrow key={i} x1={x} y1={y} x2={x - 6} y2={y - 9.7} color={RED} shaft="#e08a8a" head={3} half={1.1} />;
    })}
    <Arrow x1={846} y1={378.5} x2={855.5} y2={393} color={RED} />
    <Arrow x1={882.7} y1={353.3} x2={892} y2={367.5} color={RED} />
    {range(14).map((i) => {
      const x = 907.3 + i * 15.1;
      const y = 393.3 - (x - 855.7) * SLOPE;
      return <Arrow key={i} x1={x - 8} y1={y - 11.7} x2={x} y2={y} color={RED} shaft="#cc4a4a" head={4} half={1.4} />;
    })}
    {range(13).map((i) => {
      const x = 1230.7 + i * 15.05;
      const y = 256.7 + i * 10.5;
      return <Arrow key={i} x1={x} y1={y} x2={x + 7} y2={y - 10.8} color={RED} shaft="#d46060" head={3} half={1.3} />;
    })}
    <path d="M1418.500 360v40h8v-40z" fill="#fff" />

    {/* dead load on both rafters */}
    <g fill="#e3f5f5" stroke="#b6dede" strokeWidth="0.8">
      <path d="M909 368.500L1141 206v26L909 394z" />
      <path d="M1373 368.500L1141 206v26L1373 394z" />
    </g>
    {range(33).map((i) => {
      const x = 909 + i * 14.5;
      const y = 394 - (i <= 16 ? i : 32 - i) * 14.5 * SLOPE;
      return i === 16 ? null : (
        <Arrow key={i} x1={x} y1={y - 25} x2={x} y2={y - 1} color={TEAL} shaft="#2aa3a3" head={7} half={2} w={1.3} />
      );
    })}

    {/* collar beam loads */}
    <rect x="1053.700" y="296.500" width="175" height="34" fill="#fae4e4" />
    <path d="M1053.700 296.500h175" stroke="#cf7b7b" />
    <rect x="1053.700" y="344.500" width="175" height="20" fill="#e3f5f5" />
    <path d="M1053.700 364.500h175" stroke="#9fd3d3" />
    <path d="M909 468.300L1141 305.300 1373.500 468.300" fill="none" stroke="#bbb" strokeDasharray="3 2" />
    <path d="M1053.700 367h175" stroke="#ccc" strokeWidth="2" strokeDasharray="3 2" />
    {range(10).map((i) => (
      <g key={i}>
        <Arrow x1={1053.7 + i * 19.44} y1={297} x2={1053.7 + i * 19.44} y2={330} color="#9c000a" shaft="#c4000c" head={9} half={2.6} w={1.4} />
        <Arrow x1={1053.7 + i * 19.44} y1={345} x2={1053.7 + i * 19.44} y2={363.5} color={TEAL} shaft="#4fb0b0" head={5} half={1.7} />
      </g>
    ))}
    <circle cx="1141" cy="305.500" r="3.200" fill="#000" />

    <Support x={1053.7} y={367.3} n="3" />
    <Support x={1151.7} y={367.3} n="4" />
    <Support x={1228.7} y={367.3} n="5" />
    <Support x={909} y={468.5} n="1" />
    <Support x={1373.5} y={468.5} n="2" />

    <LoadLabel x={951} y={259} text="0,10" color={RED} />
    <LoadLabel x={969} y={285} text="0,34" color={RED} />
    <LoadLabel x={1008} y={292} text="1,00" color={TEAL} />
    <LoadLabel x={834} y={339} text="0,24" color={RED} />
    <LoadLabel x={852} y={365} text="0,51" color={RED} />
    <LoadLabel x={1124} y={306} text="1,50" color={RED} />
    <LoadLabel x={1124} y={347} text="0,60" color={TEAL} />
    <LoadLabel x={1199} y={230} text="0,31" color={RED} />
    <LoadLabel x={1240} y={292} text="1,00" color={TEAL} />
    <LoadLabel x={1315} y={311} text="0,24" color={RED} />
  </svg>
);

/* ---------- document page ---------- */

const Sub = ({ children }) => <span className="text-[8px] leading-none">{children}</span>;

const materialHead = [
  ['f', 'm,k', 'f', 'v,k', 'N/mm²', 'w-[75px]'],
  ['f', 't,0,k', 'f', 'c,0,k', 'N/mm²', 'w-[76px]'],
  ['f', 't,90,k', 'f', 'c,90,k', 'N/mm²', 'w-[75px]'],
  ['E', '0,mean', 'E', '0,05', 'N/mm²', 'w-[75px]'],
  ['E', '90,mean', 'E', '90,05', 'N/mm²', 'w-[76px]'],
  ['G', 'mean', 'G', '05', 'N/mm²', 'w-[75px]'],
  ['ρ', 'k', 'ρ', 'm', 'kg/m³', 'w-[66px]'],
  ['γ', '', '', '', 'kN/m³', 'w-[68px]'],
];
const materialRow = [
  ['24.00', '4.00'],
  ['14.50', '21.00'],
  ['0.40', '2.50'],
  ['11000', '7400'],
  ['370', '247'],
  ['690', '460'],
  ['350', '420'],
  ['6.00', ''],
];
const rafterHead = [
  ['Feld', '', 'w-[56px]'],
  ['Länge Gfl', '[m]', 'w-[111px]'],
  ['Länge Dfl', '[m]', 'w-[111px]'],
  ['Seite', '', 'w-[77px]'],
  ['Neigung', '[°]', 'w-[99px]'],
  ['Querschnitt', '[cm]', 'w-[132px]'],
];
const rafterRow = ['1', '7.60', '9.28', 'links', '35.0', '10.0/20.0'];

const Page = () => (
  <article className="w-[700px] shrink-0 border-x border-black bg-white font-[Roboto,sans-serif] text-[12px] leading-3 text-black shadow-[0_0_10px_rgba(0,0,0,0.6)]">
    <LoadDiagram />
    <div className="pl-[55px]">
      <h3 className="leading-4 font-bold text-[#333]">Material</h3>
      <h4 className="mt-[3px] leading-4 font-bold">Materialwerte Holz</h4>
      <div className="mt-1 grid grid-cols-[188px_48px_24px_33px_80px_11px_22px_20px_1fr] grid-rows-[12px_12px] whitespace-nowrap">
        <span>Nadelholz C24 gemäß EN 338:2016</span>
        <span className="text-right">E<Sub>0,mean</Sub></span>
        <span className="text-center">=</span>
        <span className="text-right">11000</span>
        <span className="pl-[7px]">N/mm²</span>
        <span className="col-start-6">ρ<Sub>k</Sub></span>
        <span className="text-center">=</span>
        <span className="text-right">350</span>
        <span className="pl-[7px]">kg/m³</span>
        <span className="col-start-2 text-right">G<Sub>mean</Sub></span>
        <span className="text-center">=</span>
        <span className="text-right">690</span>
        <span className="pl-[7px]">N/mm²</span>
      </div>
      <h4 className="mt-[5px] leading-4 font-bold">Materialkennwerte</h4>
      <table className="mt-[3px] ml-px table-fixed border-collapse border border-[#999]">
        <thead>
          <tr className="h-[42px] bg-[#fc9] text-right align-top">
            {materialHead.map(([a, as, b, bs, unit, w]) => (
              <th key={a + as} className={clsx('border border-[#999] pt-[3px] pr-[3px] font-normal', w)}>
                <span className="block h-3">{a}<Sub>{as}</Sub></span>
                <span className="block h-3">{b}<Sub>{bs}</Sub></span>
                <span className="block h-3">{unit}</span>
              </th>
            ))}
          </tr>
        </thead>
        <tbody>
          <tr className="h-[30px] text-right align-top">
            {materialRow.map(([top, bottom], i) => (
              <td key={i} className="border border-[#999] pt-[3px] pr-[3px]">
                <span className="block h-3">{top}</span>
                <span className="block h-3">{bottom}</span>
              </td>
            ))}
          </tr>
        </tbody>
      </table>
      <h3 className="mt-1 leading-4 font-bold text-[#333]">Geometrie</h3>
      <div className="mt-1 grid grid-cols-[84px_45px_22px_30px_44px_84px_54px_22px_30px_1fr] whitespace-nowrap">
        <span>Sparrenabstand</span>
        <span className="text-right">e</span>
        <span className="text-center">=</span>
        <span className="text-right">100.0</span>
        <span className="pl-[7px]">cm</span>
        <span>Gesamt-Firsthöhe</span>
        <span className="text-right">h</span>
        <span className="text-center">=</span>
        <span className="text-right">6.00</span>
        <span className="pl-[7px]">m</span>
        <span>Dachlänge</span>
        <span className="text-right">b,Roof</span>
        <span className="text-center">=</span>
        <span className="text-right">20.00</span>
        <span className="pl-[7px]">m</span>
        <span>Gebäudelänge</span>
        <span className="text-right">b,Wall</span>
        <span className="text-center">=</span>
        <span className="text-right">20.00</span>
        <span className="pl-[7px]">m</span>
      </div>
      <h4 className="mt-[7px] leading-4 font-bold">Sparren</h4>
      <table className="mt-0.5 ml-px table-fixed border-collapse border border-[#999]">
        <thead>
          <tr className="h-[31px] bg-[#fc9] text-left align-top">
            {rafterHead.map(([text, unit, w]) => (
              <th key={text} className={clsx('border border-[#999] pt-[3px] pl-px font-normal', w)}>
                <span className="block h-3">{text}</span>
                <span className="block h-3">{unit}</span>
              </th>
            ))}
          </tr>
        </thead>
        <tbody>
          <tr className="align-top">
            {rafterRow.map((v) => (
              <td key={v} className="border border-[#999] pt-[2px] pl-px">{v}</td>
            ))}
          </tr>
        </tbody>
      </table>
    </div>
  </article>
);

const Chevron = ({ d }) => (
  <svg width="10" height="10" viewBox="0 0 10 10" fill="none" stroke="currentColor" strokeWidth="2">
    <path d={d} />
  </svg>
);

const Viewer = () => (
  <div className="flex min-w-0 flex-1 flex-col pl-2.5">
    <div className="flex h-[22px] shrink-0 items-center justify-center overflow-hidden pr-4 pl-[18px]">
      <RulerTop />
    </div>
    <div className="flex min-h-0 flex-1">
      <div className="w-[18px] shrink-0 overflow-hidden"><RulerLeft /></div>
      <main className="flex min-w-0 flex-1 items-start justify-center overflow-hidden bg-[#a0a0a0] pl-[3px]">
        <Page />
      </main>
      <div className="flex w-[17px] shrink-0 flex-col items-center bg-[#f0f0f0] py-1 text-[#555]">
        <Chevron d="M1 7l4-4 4 4" />
        <div className="mt-[74px] h-8 w-[15px] bg-[#cdcdcd]" />
        <div className="mt-auto"><Chevron d="M1 3l4 4 4-4" /></div>
      </div>
    </div>
    <div className="flex h-[17px] shrink-0 items-center justify-between pr-5 pl-[21px] text-[#c0c0c0]">
      <Chevron d="M7 1L3 5l4 4" />
      <Chevron d="M3 1l4 4-4 4" />
    </div>
  </div>
);

/* ---------- bottom tabs ---------- */

const resultTabs = ['Auflager am linken Sparren', 'Auflager am rechten Sparren', 'Kehlbalkenauflager', 'Standard-Lastfälle', 'Zusatz-Lastfälle'];

const IconGrid = () => (
  <svg width="15" height="13" viewBox="0 0 15 13">
    <rect x="0.500" y="0.500" width="14" height="12" fill="#fff" stroke="#8fa5c8" />
    <rect x="0" y="0" width="15" height="4" fill="#6f9be6" />
    <path d="M4 4v9M7.500 4v9M11 4v9M1 7h13M1 10h13" stroke="#b9c6dd" />
  </svg>
);

const BottomTabs = () => (
  <div className="flex h-6 shrink-0 items-end bg-[#bbcde5] pr-1 pl-1.5 font-[Roboto,sans-serif] text-[11px] text-black">
    {resultTabs.map((tab, i) => (
      <button
        key={tab}
        className={clsx('mr-1.5 flex h-[21px] items-center gap-[9px] rounded-t pr-3.5 pl-[5px] whitespace-nowrap', i === 0 && 'bg-linear-to-b from-[#f6faff] to-[#eef5fd]')}
      >
        <IconGrid />
        {tab}
      </button>
    ))}
    <button aria-label="Schließen" className="mb-2 ml-auto">
      <svg width="8" height="8" viewBox="0 0 8 8"><path d="M.5.500l7 7M7.500.500l-7 7" stroke="#000" strokeWidth="1.500" /></svg>
    </button>
  </div>
);

export default function App() {
  return (
    <div className="flex h-screen min-w-[1380px] flex-col overflow-hidden bg-[#f0f0f0] font-['Liberation_Sans',Arial,sans-serif]">
      <TitleBar />
      <RibbonTabs />
      <Ribbon />
      <div className="flex min-h-0 flex-1">
        <PropertiesPanel />
        <div className="ml-[3px] flex min-w-0 flex-1 flex-col">
          <div className="flex h-[23px] shrink-0 items-end bg-[#bbcde5] font-[Roboto,sans-serif] text-[11px] text-black">
            <button className="h-5 w-[58px]">Grafik</button>
            <button className="h-5 w-[66px] rounded-t-[3px] bg-linear-to-b from-[#e6f0fb] to-white">Dokument</button>
          </div>
          <DocToolbar />
          <div className="flex min-h-0 flex-1">
            <ContentsPane />
            <Viewer />
          </div>
          <div className="flex h-[25px] shrink-0 items-end justify-end border-t border-[#d5d5d5] pr-[3px] pb-1.5">
            <svg width="10" height="10" viewBox="0 0 10 10" fill="#a5a5a5">
              <path d="M8 0h2v2H8zM8 4h2v2H8zM8 8h2v2H8zM4 4h2v2H4zM4 8h2v2H4zM0 8h2v2H0z" />
            </svg>
          </div>
          <BottomTabs />
        </div>
      </div>
      <footer className="h-[22px] shrink-0 border-t border-[#c3c3c3] bg-[#f2f1f0]" />
    </div>
  );
}
